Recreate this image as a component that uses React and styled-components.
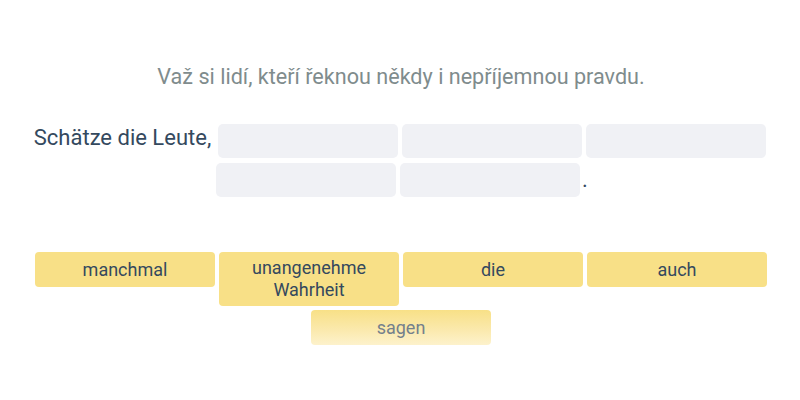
import React from "react";
import styled, { createGlobalStyle } from "styled-components";

const Global = createGlobalStyle`
  html, body { margin: 0; padding: 0; background: #ffffff; }
  body { font-family: Roboto, "Noto Sans", Arial, sans-serif; }
`;

const Page = styled.div`
  width: 800px;
  height: 400px;
  box-sizing: border-box;
  padding: 62px 16px 0 18px;
  display: flex;
  flex-direction: column;
  align-items: center;
`;

const Prompt = styled.div`
  font-size: 21.6px;
  line-height: 30px;
  color: #7f8c8d;
  text-align: center;
`;

const Sentence = styled.div`
  margin-top: 32px;
  width: 100%;
  display: flex;
  flex-wrap: wrap;
  justify-content: center;
  align-items: center;
  row-gap: 5px;
  font-size: 22px;
  line-height: 26px;
  color: #34495e;
`;

const Word = styled.span`
  margin-right: ${(p) => (p.$punct ? "0" : "5px")};
  padding-bottom: ${(p) => (p.$punct ? "0" : "6px")};
`;

const Blank = styled.div`
  width: 180px;
  height: 34px;
  margin: 0 2px;
  border-radius: 5px;
  background: #f0f1f5;
`;

const Bank = styled.div`
  margin-top: 55px;
  width: 100%;
  display: flex;
  flex-wrap: wrap;
  justify-content: center;
  align-items: flex-start;
  gap: 4px;
`;

const Tile = styled.button`
  width: 180px;
  min-height: 35px;
  box-sizing: border-box;
  border: none;
  border-radius: 4px;
  padding: 5.4px 10px;
  font-family: Roboto, "Noto Sans", Arial, sans-serif;
  font-size: 18px;
  line-height: 21.6px;
  text-align: center;
  color: ${(p) => (p.$fading ? "#74808c" : "#34495e")};
  background: ${(p) =>
    p.$fading
      ? "linear-gradient(to bottom, #f8e087 0%, #fbeaaf 60%, #fdf2cc 100%)"
      : "#f8e087"};
  cursor: pointer;
`;

const blanks = [0, 1, 2, 3, 4];
const tiles = [
  { text: "manchmal" },
  { text: "unangenehme Wahrheit" },
  { text: "die" },
  { text: "auch" },
  { text: "sagen", fading: true },
];

export default function App() {
  return (
    <>
      <Global />
      <Page>
        <Prompt>Važ si lidí, kteří řeknou někdy i nepříjemnou pravdu.</Prompt>
        <Sentence>
          <Word>Schätze die Leute,</Word>
          {blanks.map((b) => (
            <Blank key={b} />
          ))}
          <Word $punct>.</Word>
        </Sentence>
        <Bank>
          {tiles.map((t) => (
            <Tile key={t.text} $fading={t.fading}>
              {t.text}
            </Tile>
          ))}
        </Bank>
      </Page>
    </>
  );
}
